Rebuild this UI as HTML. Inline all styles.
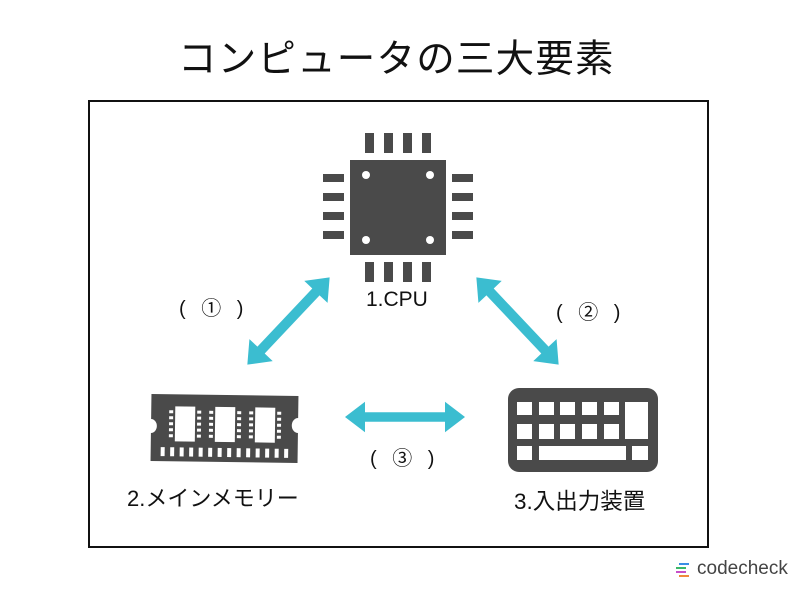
<!DOCTYPE html>
<html><head><meta charset="utf-8"><style>
body{margin:0;width:800px;height:599px;background:#fff;overflow:hidden;font-family:"Liberation Sans","Noto Sans CJK JP",sans-serif;}
.t{position:absolute;white-space:nowrap;color:#111;}
</style></head><body>
<div class="t" style="left:178px;top:28px;font-size:38.5px;letter-spacing:1.2px;">コンピュータの三大要素</div>
<svg width="800" height="599" style="position:absolute;left:0;top:0">
<rect x="89" y="101" width="619" height="446" fill="none" stroke="#111" stroke-width="2"/>
<g fill="#4a4a4a">
<rect x="350" y="160" width="96" height="95"/>
<rect x="365" y="133" width="9" height="20"/><rect x="384" y="133" width="9" height="20"/><rect x="403" y="133" width="9" height="20"/><rect x="422" y="133" width="9" height="20"/>
<rect x="365" y="262" width="9" height="20"/><rect x="384" y="262" width="9" height="20"/><rect x="403" y="262" width="9" height="20"/><rect x="422" y="262" width="9" height="20"/>
<rect x="323" y="174" width="21" height="8"/><rect x="323" y="193" width="21" height="8"/><rect x="323" y="212" width="21" height="8"/><rect x="323" y="231" width="21" height="8"/>
<rect x="452" y="174" width="21" height="8"/><rect x="452" y="193" width="21" height="8"/><rect x="452" y="212" width="21" height="8"/><rect x="452" y="231" width="21" height="8"/>
</g>
<g fill="#fff"><circle cx="366" cy="175" r="4"/><circle cx="430" cy="175" r="4"/><circle cx="366" cy="240" r="4"/><circle cx="430" cy="240" r="4"/></g>
<g transform="rotate(0.8 224 428)">
<path d="M151 395 H298 V417 A5 6 0 0 0 298 432 V462 H151 V434 A5 6 0 0 0 151 420 Z" fill="#4a4a4a"/>
<g fill="#fff">
<rect x="175" y="407" width="20" height="35"/><rect x="215" y="407" width="20" height="35"/><rect x="255" y="407" width="20" height="35"/>
</g>
<g fill="#fff">
<rect x="169" y="411" width="4" height="3"/><rect x="169" y="417" width="4" height="3"/><rect x="169" y="423" width="4" height="3"/><rect x="169" y="429" width="4" height="3"/><rect x="169" y="435" width="4" height="3"/>
<rect x="197" y="411" width="4" height="3"/><rect x="197" y="417" width="4" height="3"/><rect x="197" y="423" width="4" height="3"/><rect x="197" y="429" width="4" height="3"/><rect x="197" y="435" width="4" height="3"/>
<rect x="209" y="411" width="4" height="3"/><rect x="209" y="417" width="4" height="3"/><rect x="209" y="423" width="4" height="3"/><rect x="209" y="429" width="4" height="3"/><rect x="209" y="435" width="4" height="3"/>
<rect x="237" y="411" width="4" height="3"/><rect x="237" y="417" width="4" height="3"/><rect x="237" y="423" width="4" height="3"/><rect x="237" y="429" width="4" height="3"/><rect x="237" y="435" width="4" height="3"/>
<rect x="249" y="411" width="4" height="3"/><rect x="249" y="417" width="4" height="3"/><rect x="249" y="423" width="4" height="3"/><rect x="249" y="429" width="4" height="3"/><rect x="249" y="435" width="4" height="3"/>
<rect x="277" y="411" width="4" height="3"/><rect x="277" y="417" width="4" height="3"/><rect x="277" y="423" width="4" height="3"/><rect x="277" y="429" width="4" height="3"/><rect x="277" y="435" width="4" height="3"/>
</g>
<g fill="#fff">
<rect x="161" y="448" width="4" height="9"/><rect x="170.5" y="448" width="4" height="9"/><rect x="180" y="448" width="4" height="9"/><rect x="189.5" y="448" width="4" height="9"/><rect x="199" y="448" width="4" height="9"/><rect x="208.5" y="448" width="4" height="9"/><rect x="218" y="448" width="4" height="9"/><rect x="227.5" y="448" width="4" height="9"/><rect x="237" y="448" width="4" height="9"/><rect x="246.5" y="448" width="4" height="9"/><rect x="256" y="448" width="4" height="9"/><rect x="265.5" y="448" width="4" height="9"/><rect x="275" y="448" width="4" height="9"/><rect x="284.5" y="448" width="4" height="9"/>
</g>
</g>
<rect x="508" y="388" width="150" height="84" rx="11" fill="#4a4a4a"/>
<g fill="#fff">
<rect x="517" y="402" width="15" height="13"/><rect x="539" y="402" width="15" height="13"/><rect x="560" y="402" width="15" height="13"/><rect x="582" y="402" width="15" height="13"/><rect x="604" y="402" width="15" height="13"/>
<rect x="625" y="402" width="23" height="37"/>
<rect x="517" y="424" width="15" height="15"/><rect x="539" y="424" width="15" height="15"/><rect x="560" y="424" width="15" height="15"/><rect x="582" y="424" width="15" height="15"/><rect x="604" y="424" width="15" height="15"/>
<rect x="517" y="446" width="15" height="14"/><rect x="539" y="446" width="87" height="14"/><rect x="632" y="446" width="16" height="14"/>
</g>
<defs><path id="arr" d="M-60 0 L-40 -16 L-40 -5 L40 -5 L40 -16 L60 0 L40 16 L40 5 L-40 5 L-40 16 Z" fill="#3bbdd0"/></defs>
<use href="#arr" transform="translate(288.5 321) rotate(-46.7)"/>
<use href="#arr" transform="translate(517.5 321) rotate(46.7)"/>
<use href="#arr" transform="translate(405 417) scale(1 0.95)"/>
<rect x="679" y="563" width="10" height="2" fill="#3a8ee6"/>
<rect x="676" y="567" width="10" height="2" fill="#3bb86a"/>
<rect x="676" y="571" width="10" height="2" fill="#c84fc8"/>
<rect x="679" y="575" width="10" height="2" fill="#f08a3c"/>
</svg>
<div class="t" style="left:366px;top:288px;font-size:21px;">1.CPU</div>
<div class="t" style="left:179px;top:292px;font-size:20px;word-spacing:10px;">( ① )</div>
<div class="t" style="left:556px;top:296px;font-size:20px;word-spacing:10px;">( ② )</div>
<div class="t" style="left:370px;top:442px;font-size:20px;word-spacing:10px;">( ③ )</div>
<div class="t" style="left:127px;top:481px;font-size:22px;">2.メインメモリー</div>
<div class="t" style="left:514px;top:484px;font-size:22.5px;">3.入出力装置</div>
<div class="t" style="left:697px;top:558px;font-size:19px;color:#444;">codecheck</div>
</body></html>
